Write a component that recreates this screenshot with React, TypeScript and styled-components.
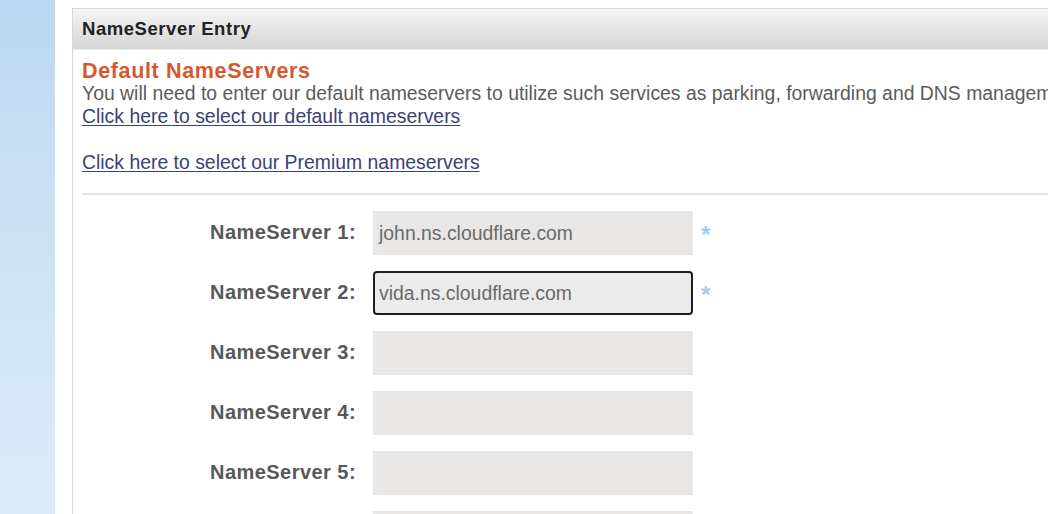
import React from "react";
import styled, { createGlobalStyle } from "styled-components";

const GlobalStyle = createGlobalStyle`
  html, body {
    margin: 0;
    padding: 0;
    background: #ffffff;
    overflow: hidden;
  }
  body {
    font-family: "Liberation Sans", Arial, sans-serif;
  }
`;

const Page = styled.div`
  display: flex;
  width: 1048px;
  height: 514px;
  overflow: hidden;
`;

const Sidebar = styled.div`
  flex: 0 0 55px;
  background: linear-gradient(180deg, #bbd9f3 0%, #cde3f6 50%, #dcebf9 100%);
`;

const Main = styled.div`
  flex: 1;
  padding: 8px 0 0 17px;
  min-width: 0;
`;

const Panel = styled.section`
  width: 1100px;
  border-left: 1px solid #d6d6d6;
  border-top: 1px solid #d9d9d9;
`;

const PanelHeader = styled.div`
  height: 40px;
  line-height: 40px;
  padding-left: 9px;
  background: linear-gradient(180deg, #f5f5f5 0%, #e8e8e8 40%, #d5d5d5 100%);
  border-bottom: 1px solid #ececec;
  font-size: 18.5px;
  letter-spacing: 0.55px;
  font-weight: bold;
  color: #222222;
`;

const PanelBody = styled.div`
  padding: 10px 0 0 9px;
`;

const Heading = styled.h2`
  margin: 0;
  font-size: 21.5px;
  letter-spacing: 0.65px;
  line-height: 22px;
  font-weight: bold;
  color: #d5582f;
`;

const Text = styled.p`
  margin: 0;
  font-size: 19.4px;
  line-height: 23px;
  color: #5b5b5b;
  white-space: nowrap;
`;

const LinkLine = styled.div<{ $gap?: boolean }>`
  margin-top: ${(p) => (p.$gap ? "23px" : "0")};
  font-size: 19.4px;
  line-height: 23px;
`;

const Link = styled.a`
  color: #3c4176;
  text-decoration: underline;
  text-underline-offset: 2px;
  cursor: pointer;
`;

const Divider = styled.hr`
  margin: 19px 0 0 0;
  border: none;
  height: 2px;
  background: #e4e4e4;
`;

const Form = styled.div`
  display: grid;
  grid-template-columns: 274px 320px 20px;
  column-gap: 17px;
  row-gap: 16px;
  margin-top: 16px;
  align-items: center;
`;

const Label = styled.label`
  justify-self: end;
  margin-top: -2px;
  font-size: 20px;
  letter-spacing: 0.45px;
  font-weight: bold;
  color: #585858;
  white-space: nowrap;
`;

const Field = styled.div<{ $focused?: boolean }>`
  box-sizing: border-box;
  height: 44px;
  display: flex;
  align-items: center;
  padding-left: ${(p) => (p.$focused ? "4px" : "6px")};
  background: ${(p) => (p.$focused ? "#ebebeb" : "#e8e7e6")};
  border: ${(p) => (p.$focused ? "2px solid #1e1e1e" : "none")};
  border-radius: ${(p) => (p.$focused ? "4px" : "0")};
  font-size: 19.4px;
  color: #6a6a6a;
  white-space: nowrap;
`;

const Required = styled.span`
  margin: 4px 0 0 -9px;
  font-size: 24px;
  font-weight: bold;
  color: #a6cbec;
  line-height: 1;
`;

const rows = [
  { n: 1, value: "john.ns.cloudflare.com", required: true },
  { n: 2, value: "vida.ns.cloudflare.com", required: true, focused: true },
  { n: 3, value: "" },
  { n: 4, value: "" },
  { n: 5, value: "" },
  { n: 6, value: "" },
];

export default function App() {
  return (
    <>
      <GlobalStyle />
      <Page>
        <Sidebar />
        <Main>
          <Panel>
            <PanelHeader>NameServer Entry</PanelHeader>
            <PanelBody>
              <Heading>Default NameServers</Heading>
              <Text>
                You will need to enter our default nameservers to utilize such services as parking, forwarding and DNS management.
              </Text>
              <LinkLine>
                <Link>Click here to select our default nameservers</Link>
              </LinkLine>
              <LinkLine $gap>
                <Link>Click here to select our Premium nameservers</Link>
              </LinkLine>
              <Divider />
              <Form>
                {rows.map((r) => (
                  <React.Fragment key={r.n}>
                    <Label>NameServer {r.n}:</Label>
                    <Field $focused={r.focused}>{r.value}</Field>
                    <Required>{r.required ? "*" : ""}</Required>
                  </React.Fragment>
                ))}
              </Form>
            </PanelBody>
          </Panel>
        </Main>
      </Page>
    </>
  );
}
